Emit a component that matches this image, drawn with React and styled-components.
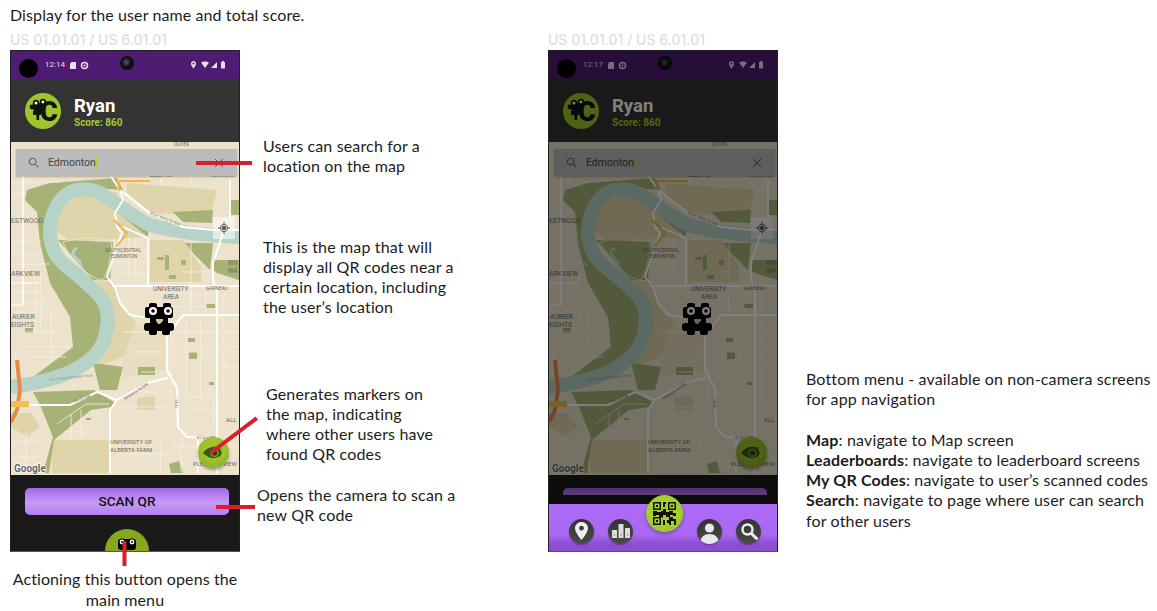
import React from 'react';
import styled, { createGlobalStyle } from 'styled-components';

const Global = createGlobalStyle`
  html, body { margin: 0; padding: 0; background: #fff; overflow: hidden; }
  body { font-family: "Lato", "Open Sans", sans-serif; }
`;
const Board = styled.main`
  position: relative; width: 1157px; height: 611px; display: flex; align-items: flex-start; color: #1c1c1c;
`;
const ScreenColumn = styled.section`
  width: ${p => p.$width}px; margin-left: ${p => p.$left}px; flex: none;
`;
const Lead = styled.p`
  margin: 0; height: 31px; padding-top: 4px; box-sizing: border-box; font-size: 16px; line-height: 21px; white-space: nowrap; letter-spacing: .1px;
`;
const Story = styled.div`
  height: 19px; font: 500 14px/17px Inter, sans-serif; color: #dedede; white-space: nowrap;
`;
const Phone = styled.div`
  position: relative; width: 230px; height: 502px; box-sizing: border-box; border: 1px solid #222; border-bottom-color: #555;
  background: #1a1a1a; overflow: hidden; display: flex; flex-direction: column;
`;
const StatusBar = styled.div`
  height: 28px; flex: none; background: #4e1d73; display: flex; align-items: center; padding: 0 12px 0 8px; position: relative; color: #e8def0;
`;
const Hole = styled.span`
  width: 19px; height: 19px; border-radius: 50%; background: #000; margin-top: 6px; flex: none;
`;
const Time = styled.span`
  font: 400 8px/1 Roboto, sans-serif; margin-left: 7px; margin-right: 4px;
`;
const Lens = styled.span`
  position: absolute; left: 109px; top: 5px; width: 14px; height: 14px; border-radius: 50%;
  background: radial-gradient(circle at 45% 45%, #3d4a5a 0 12%, #10141a 40%, #000 100%);
`;
const StatusRight = styled.span`
  margin-left: auto; display: flex; align-items: center;
`;
const Header = styled.header`
  height: 63px; flex: none; background: #333; display: flex; align-items: center; padding: 0 0 0 14px; gap: 13px;
`;
const Identity = styled.div`
  display: flex; flex-direction: column; margin-top: 2px;
`;
const Name = styled.span`
  font: 700 18.5px/22px Roboto, sans-serif; color: #fff;
`;
const Score = styled.span`
  font: 700 10px/12px Roboto, sans-serif; color: #a1cc2e;
`;
const MapArea = styled.div`
  position: relative; height: 333px; flex: none; background: #ede2cb;
`;
const MapPicture = styled.svg`
  display: block; width: 228px; height: 333px;
`;
const SearchBox = styled.div`
  position: absolute; left: 5px; top: 7px; width: 221px; height: 27px; background: #bcbcbc; box-shadow: 0 1px 2px rgba(0,0,0,.25);
  display: flex; align-items: center; padding: 0 12px; box-sizing: border-box; color: #555;
`;
const SearchText = styled.span`
  font: 400 10.5px/14px Roboto, sans-serif; color: #444; margin-left: 9px; border-right: 1px solid #b2cc2e;
`;
const ClearIcon = styled.svg`
  margin-left: auto; margin-right: 1px;
`;
const LocateButton = styled.div`
  position: absolute; left: 202px; top: 75px; width: 22px; height: 22px; background: rgba(255,255,255,.55);
  display: flex; align-items: center; justify-content: center;
`;
const EyeButton = styled.div`
  position: absolute; left: 187px; top: 295px; width: 31px; height: 31px; border-radius: 50%;
  background: radial-gradient(circle at 50% 40%, #9fc52b 40%, #85a821 100%); box-shadow: 0 2px 3px rgba(0,0,0,.35);
  display: flex; align-items: center; justify-content: center;
`;
const BottomArea = styled.div`
  flex: 1; background: #1a1a1a; padding: 13px 10px 0 14px; position: relative;
`;
const ScanButton = styled.button`
  display: block; width: 204px; height: 27px; border: 0; border-radius: 5px; padding: 0;
  background: linear-gradient(180deg, #a567ec 0%, #c79bf6 55%, #b47ff0 100%);
  font: 500 13.6px/27px Roboto, sans-serif; color: #111;
`;
const MenuButton = styled.div`
  position: absolute; left: 94px; top: 54px; width: 44px; height: 44px; border-radius: 50%; background: #86a81f;
  display: flex; justify-content: center; padding-top: 9px; box-sizing: border-box;
`;
const Dim = styled.div`
  position: absolute; inset: 0; background: rgba(0,0,0,.5);
`;
const NavSheet = styled.nav`
  position: absolute; left: 0; right: 0; bottom: 0; height: 47px; border-top: 9px solid #0b0b0b; box-sizing: content-box;
  background: linear-gradient(180deg, #ad6cf5 0%, #aa69f2 65%, #8e4fd1 85%, #8a4bcc 100%);
  display: flex; align-items: center; padding-left: 20px;
`;
const NavDisc = styled.span`
  width: 25px; height: 25px; border-radius: 50%; flex: none; margin-left: ${p => p.$gap || 0}px; margin-top: 7px;
  background: linear-gradient(180deg, #333, #4a4a4a); box-shadow: 0 1px 2px rgba(0,0,0,.3);
  display: flex; align-items: center; justify-content: center; overflow: hidden;
`;
const QrFab = styled.span`
  position: absolute; left: 97px; top: -9px; width: 37px; height: 37px; border-radius: 50%;
  background: radial-gradient(circle at 50% 45%, #a6d02d 50%, #98bf28 100%); box-shadow: 0 2px 4px rgba(0,0,0,.3);
  display: flex; align-items: center; justify-content: center;
`;
const NoteColumn = styled.aside`
  width: ${p => p.$width}px; margin-left: ${p => p.$left}px; flex: none; display: flex; flex-direction: column;
`;
const Note = styled.p`
  margin: ${p => p.$top || 0}px 0 0 ${p => p.$indent || 0}px; font-size: 16px; line-height: 20.25px; white-space: nowrap; width: max-content; letter-spacing: .15px;
`;
const CenterNote = styled.p`
  margin: 16px 0 0 -6px; width: 242px; text-align: center; font-size: 16px; line-height: 21px; letter-spacing: .1px;
`;
const Leader = styled.i`
  position: absolute; left: ${p => p.$x}px; top: ${p => p.$y}px; width: ${p => p.$len}px; height: 3.5px; background: #d81f2e;
  transform-origin: 1.75px 1.75px; transform: rotate(${p => p.$deg || 0}deg);
`;

const StatusIcons = () => (
  <svg width="36" height="10" viewBox="0 0 36 10" fill="currentColor">
    <path fillRule="evenodd" d="M2.5 1a2.6 2.6 0 0 0-2.5 2.7C0 5.5 2.5 8.5 2.5 8.5S5 5.5 5 3.7A2.6 2.6 0 0 0 2.5 1Zm0 3.6a1 1 0 1 1 0-2 1 1 0 0 1 0 2Z" />
    <path d="M10 2.5c2-1.5 6-1.5 8 0L14 8Z" />
    <path d="M20 8 26 2v6Z" />
    <rect x="30" y="2" width="4" height="6.5" rx=".6" />
    <rect x="31" y="1" width="2" height="1.5" />
  </svg>
);
const NotifyIcons = () => (
  <svg width="21" height="9" viewBox="0 0 21 9" fill="currentColor">
    <path d="M1 2.5 2.5 1H7v7H1Z" />
    <circle cx="15.5" cy="4.5" r="3" fill="none" stroke="currentColor" strokeWidth="1.5" />
    <circle cx="15.5" cy="4.5" r="1" />
  </svg>
);
const Logo = () => (
  <svg width="36" height="36" viewBox="0 0 36 36">
    <circle cx="18" cy="18" r="18" fill="#9ec62c" />
    <g fill="#111">
      <circle cx="11" cy="10" r="3.2" /><circle cx="18" cy="9" r="3.2" /><circle cx="7" cy="14" r="2.4" />
      <rect x="8" y="10" width="10" height="8" rx="2" /><circle cx="13" cy="19" r="3.6" />
      <rect x="11.5" y="21" width="2.6" height="6" /><rect x="8" y="18" width="2" height="4" />
    </g>
    <circle cx="11" cy="10" r="1.5" fill="#fff" /><circle cx="18" cy="9" r="1.5" fill="#fff" />
    <text x="15" y="28" fontFamily="Roboto" fontWeight="900" fontSize="27" fill="#111">C</text>
  </svg>
);
const Monster = ({ x, y }) => (
  <g transform={`translate(${x} ${y})`}>
    <g fill="#000">
      <rect x="1" y="4" width="28" height="11" rx="2" />
      <rect x="5" y="0" width="8" height="8" rx="2" /><rect x="19" y="0" width="8" height="8" rx="2" />
      <rect x="6" y="10" width="18" height="14" />
      <rect x="0" y="20" width="30" height="8" rx="3" />
      <rect x="5" y="24" width="8" height="8" rx="2" /><rect x="18" y="24" width="8" height="8" rx="2" />
    </g>
    <circle cx="9" cy="8" r="4" fill="#fff" /><circle cx="9" cy="8" r="1.8" fill="#000" />
    <circle cx="24" cy="8" r="4" fill="#fff" /><circle cx="24" cy="8" r="1.8" fill="#000" />
    <path d="M12 16h7v2l-3 3h-2l-2-3Z" fill="#c9c2a0" />
  </g>
);
const Road = ({ d, w = 1.8 }) => <path d={d} fill="none" stroke="#fff" strokeWidth={w} strokeLinecap="round" strokeLinejoin="round" />;
const Label = ({ x, y, s = 6, c = '#6e6a5e', r, children }) => (
  <text x={x} y={y} fontFamily="Roboto" fontSize={s} fill={c} transform={r ? `rotate(${r} ${x} ${y})` : undefined}>{children}</text>
);
const CityMap = () => (
  <MapPicture viewBox="0 0 228 333">
    <rect width="228" height="333" fill="#ede2cb" />
    <g fill="#e0d4ab">
      <path d="M116 41 206 48 200 72 160 72 139 71 116 51Z" />
      <path d="M46 56 106 50 112 70 137 95 60 100 46 90Z" />
      <path d="M139 98 172 98 190 125 190 140 139 140Z" />
      <path d="M85 138 102 140 110 165 125 180 112 215 85 225 100 190Z" />
      <path d="M41 298H99V331H41Z" /><path d="M126 256 144 254V268H126Z" />
      <path d="M0 271 20 271 29 285 16 295 0 285Z" />
      <path d="M112 180 155 190 155 230 112 235Z" opacity=".35" />
    </g>
    <g fill="#a7b276">
      <path d="M16 48 39 41 106 36 112 48 82 46 49 56 36 71 33 95 29 101 26 70 14 58Z" />
      <path d="M29 101 39 141 59 175 62 205 22 235 0 238V244L50 240 85 220 104 185 92 150 60 125 38 90Z" />
      <path d="M47 98 102 100 99 138 82 138Z" />
      <path d="M112 65 137 85V95L112 75Z" />
      <path d="M162 70 202 68 201 81 172 80Z" />
      <path d="M174 101 202 101 199 128 182 111Z" />
      <path d="M203 118H228V138L203 130Z" /><path d="M220 58H228V73H220Z" />
      <path d="M22 250 83 248 103 260 100 265 80 268 43 298 38 331H32L42 295 30 265Z" />
      <path d="M82 221 112 225 106 248 89 248Z" />
      <rect x="154" y="113" width="4" height="15" /><rect x="146" y="115" width="7" height="3" /><rect x="170" y="118" width="5" height="5" />
      <rect x="195" y="162" width="9" height="4" /><rect x="127" y="225" width="17" height="8" /><rect x="178" y="210" width="8" height="7" />
      <rect x="177" y="196" width="7" height="4" /><rect x="14" y="186" width="8" height="5" /><rect x="158" y="133" width="7" height="4" />
      <path d="M158 322 168 319 172 331H160Z" /><rect x="198" y="240" width="5" height="3" /><rect x="75" y="276" width="5" height="2" />
    </g>
    <path d="M229 95C205 94 172 92 139 83 125 77 112 65 89 51 78 46 66 46 58 51 46 57 39 75 39 91 40 105 44 113 49 118 58 128 80 142 92 158 97 168 98 176 96 185 94 200 90 207 82 215 70 226 58 232 40 237 25 241 10 244 0 245" fill="none" stroke="#b7d3c7" strokeWidth="14" />
    <path d="M66 106c-6 3-5 8 0 11 5 3 2 8 6 10" fill="none" stroke="#b7d3c7" strokeWidth="3" />
    <path d="M52 100c20-6 44-4 48 0 2 8-2 28-8 38-12 0-34-20-40-38Z" fill="none" stroke="#ece8d0" strokeWidth=".8" />
    <g fill="none" stroke="#f6f1e4" strokeWidth=".8">
      <path d="M0 40h50M0 52h14M20 28v12M35 28v10M60 28v8M80 28v8M125 33v8M150 33v10M180 33v12M128 33h90M205 50h20" />
      <path d="M0 100h30M0 112h30M5 122h34M0 150h30M0 160h35M5 170h35M10 190h40M8 205h50M20 215h35M24 130v60M30 130v60M40 170v50M5 210v22" />
      <path d="M150 152h60M150 165h44M150 190h60M150 210h60M160 178v80M175 178v80M190 178v80M130 230h30M120 250h40M112 190h40M120 210h30M180 150v20M195 150v20M213 150v110" />
      <path d="M105 120h30M110 132h28M108 108h28M118 95v40M125 95v40M170 130h35M180 100v70M215 190h13M215 205h13M215 225h13" />
      <path d="M46 282 75 262H98M52 290h30M60 272v26M70 268v28M107 265h50M110 285v10M178 255h25v30M182 268h20M160 305h25M170 300v30M110 312h50M186 300h20v30M150 300v30M210 290h18M210 305h18" />
      <path d="M0 300h30M0 315h30M15 290v40" />
    </g>
    <Road d="M99 33 109 48 139 71 172 85 202 88H228" w="2" />
    <Road d="M109 48 112 58 104 71 106 85 114 86 137 96V144" />
    <Road d="M106 85 111 91 99 125 96 135 104 145 109 161 119 173 132 175" w="2" />
    <Road d="M12 28V163" w="1.6" /><Road d="M219 38V75" w="1.6" />
    <Road d="M212 91 202 121 202 138 206 150V331" w="2" />
    <Road d="M102 144H228" /><Road d="M162 186 172 173H228" w="2.2" />
    <Road d="M156 195V228L166 246 167 285 176 295 202 296" w="2.2" />
    <Road d="M19 263H59L86 250 106 258 136 241 156 236" w="2" />
    <Road d="M106 258 99 268V331" w="2" /><Road d="M187 295V331" w="1.4" />
    <Road d="M0 141H28" w="1" /><Road d="M0 163H12" w="1" />
    <path d="M6 218 9 248 6 268 0 280" fill="none" stroke="#e58b4a" strokeWidth="4" />
    <path d="M0 262H18" stroke="#f2c050" strokeWidth="6" fill="none" />
    <path d="M106 38 109 49M108 39H139M103 78 116 91 105 105" stroke="#f2b544" strokeWidth="2" fill="none" />
    <Label x="139" y="72" s="3.8" r="22">River Valley Rd NW</Label>
    <Label x="38" y="239" s="3.8" c="#7fa098" r="-6">North Saskatchewan River</Label>
    <Label x="63" y="261" s="3.8" r="-20">Fox Dr NW</Label><Label x="114" y="258" s="3.8" r="-33">Belgravia Rd NW</Label>
    <Label x="164" y="255" s="3.8" r="90">114 St</Label><Label x="139" y="35" s="4.5">Jasper Ave</Label><Label x="200" y="35" s="4">DOWNTOWN</Label>
    <Label x="0" y="81" s="6.8">ESTWOOD</Label><Label x="0" y="134" s="6.8">ARKVIEW</Label>
    <Label x="1" y="177" s="6.8">AURIER</Label><Label x="0" y="185" s="6.8">EIGHTS</Label>
    <Label x="94" y="110" s="4.8">SOUTHCENTRAL</Label><Label x="100" y="116" s="4.8">EDMONTON</Label>
    <Label x="142" y="149" s="6.4">UNIVERSITY</Label><Label x="152" y="157" s="6.4">AREA</Label>
    <Label x="195" y="148" s="4.8">GARNEAU</Label><Label x="217" y="123" s="6.4">RIV</Label><Label x="217" y="131" s="6.4">WA</Label>
    <Label x="215" y="280" s="6">ALL</Label><Label x="99" y="302" s="6">UNIVERSITY OF</Label><Label x="99" y="310" s="6">ALBERTA FARM</Label>
    <Label x="182" y="324" s="6">PLEASANTVIEW</Label><Label x="163" y="4" s="4.5">OLIVER</Label><Label x="186" y="297" s="3.8">81 Ave NW</Label>
    <text x="3" y="330" fontFamily="Roboto" fontWeight="700" fontSize="10" fill="#666" stroke="#fff" strokeWidth="1.4" paintOrder="stroke">Google</text>
    <Monster x="133" y="161" />
  </MapPicture>
);
const SearchGlass = () => (
  <svg width="11" height="11" viewBox="0 0 12 12" fill="none" stroke="#666" strokeWidth="1.2"><circle cx="5" cy="5" r="3.6" /><path d="M8 8l3.2 3.2" /></svg>
);
const Eye = () => (
  <svg width="24" height="18" viewBox="0 0 24 18">
    <path d="M1 9C6 1 18 1 23 7 21 5 19 4 17 4 20 7 20 9 19 11 16 15 8 15 5 12 3 11 2 10 1 9Z" fill="#3b5710" />
    <circle cx="12.5" cy="9" r="4.2" fill="#7d9a1f" /><circle cx="12.5" cy="9" r="2.6" fill="#2b400b" />
  </svg>
);
const Screen = ({ time, dimmed, children }) => (
  <Phone>
    <StatusBar>
      <Hole /><Time>{time}</Time><NotifyIcons /><Lens /><StatusRight><StatusIcons /></StatusRight>
    </StatusBar>
    <Header>
      <Logo />
      <Identity><Name>Ryan</Name><Score>Score: 860</Score></Identity>
    </Header>
    <MapArea>
      <CityMap />
      <SearchBox>
        <SearchGlass /><SearchText>Edmonton</SearchText>
        <ClearIcon width="10" height="10" viewBox="0 0 10 10" stroke="#555" strokeWidth="1"><path d="M1 1l8 8M9 1l-8 8" /></ClearIcon>
      </SearchBox>
      <LocateButton>
        <svg width="12" height="12" viewBox="0 0 12 12" fill="none" stroke="#555"><circle cx="6" cy="6" r="3.6" /><circle cx="6" cy="6" r="1.8" fill="#555" /><path d="M6 0v2M6 10v2M0 6h2M10 6h2" /></svg>
      </LocateButton>
      <EyeButton><Eye /></EyeButton>
    </MapArea>
    <BottomArea>
      <ScanButton>SCAN QR</ScanButton>
      {!dimmed && (
        <MenuButton>
          <svg width="26" height="12" viewBox="0 0 26 12">
            <rect x="4" y="1" width="18" height="11" rx="3" fill="#000" /><circle cx="8" cy="4" r="3.6" fill="#000" /><circle cx="18" cy="4" r="3.6" fill="#000" />
            <circle cx="8" cy="4" r="2.4" fill="#fff" /><circle cx="8" cy="4" r="1" fill="#000" /><circle cx="18" cy="4" r="2.4" fill="#fff" /><circle cx="18" cy="4" r="1" fill="#000" />
          </svg>
        </MenuButton>
      )}
    </BottomArea>
    {children}
  </Phone>
);
const QrCode = () => (
  <svg width="23" height="23" viewBox="0 0 23 23" fill="#111">
    <path fillRule="evenodd" d="M0 0h8v8H0ZM1.5 1.5v5h5v-5ZM15 0h8v8h-8ZM16.5 1.5v5h5v-5ZM0 15h8v8H0ZM1.5 16.5v5h5v-5Z" />
    <rect x="3" y="3" width="2" height="2" /><rect x="18" y="3" width="2" height="2" /><rect x="3" y="18" width="2" height="2" />
    <path d="M10 0h3v2h-1v3h-2ZM10 7h3v3h3v-1h4v2h3v3h-3v-1h-3v2h3v2h3v6h-2v-4h-3v4h-2v-2h-2v-3h2v-3h-3v-2h-3v3H9v-1H6v-2H3v1H0V9h4v1h4V9h2Z" />
    <rect x="10" y="18" width="2" height="5" />
  </svg>
);
const NavBar = () => (
  <NavSheet>
    <NavDisc><svg width="13" height="18" viewBox="0 0 13 18"><path fillRule="evenodd" d="M6.5 0A6.2 6.2 0 0 0 0 6.2C0 10.5 6.5 18 6.5 18S13 10.5 13 6.2A6.2 6.2 0 0 0 6.5 0Zm0 8.6a2.4 2.4 0 1 1 0-4.8 2.4 2.4 0 0 1 0 4.8Z" fill="#efefef" /></svg></NavDisc>
    <NavDisc $gap={14}><svg width="18" height="14" viewBox="0 0 18 14"><rect x="0" y="6" width="5" height="8" fill="#ddd" /><rect x="6.5" y="0" width="5" height="14" fill="#ddd" /><rect x="13" y="4" width="5" height="10" fill="#ddd" /><path d="M2 11h1M8.5 11h1M15 11h1" stroke="#555" /></svg></NavDisc>
    <QrFab><QrCode /></QrFab>
    <NavDisc $gap={64}><svg width="25" height="25" viewBox="0 0 25 25" fill="#e8e8e8"><circle cx="12.5" cy="9" r="4.6" /><path d="M3 26c0-8 4-11 9.5-11S22 18 22 26Z" /></svg></NavDisc>
    <NavDisc $gap={14}><svg width="18" height="18" viewBox="0 0 18 18" fill="none" stroke="#eee"><circle cx="7.5" cy="7.5" r="5" strokeWidth="2.4" /><path d="M11.5 11.5l5 5" strokeWidth="3" strokeLinecap="round" /></svg></NavDisc>
  </NavSheet>
);

export default function App() {
  return (
    <Board>
      <Global />
      <ScreenColumn $left={10} $width={230}>
        <Lead>Display for the user name and total score.</Lead>
        <Story>US 01.01.01 / US 6.01.01</Story>
        <Screen time="12:14" />
        <CenterNote>Actioning this button opens the main menu</CenterNote>
      </ScreenColumn>
      <NoteColumn $left={17} $width={200}>
        <Note $top={136} $indent={6}>Users can search for a<br />location on the map</Note>
        <Note $top={60} $indent={6}>This is the map that will<br />display all QR codes near a<br />certain location, including<br />the user’s location</Note>
        <Note $top={66} $indent={9}>Generates markers on<br />the map, indicating<br />where other users have<br />found QR codes</Note>
        <Note $top={20}>Opens the camera to scan a<br />new QR code</Note>
      </NoteColumn>
      <ScreenColumn $left={91} $width={230}>
        <Lead />
        <Story>US 01.01.01 / US 6.01.01</Story>
        <Screen time="12:17" dimmed><Dim /><NavBar /></Screen>
      </ScreenColumn>
      <NoteColumn $left={28} $width={350}>
        <Note $top={369}>Bottom menu - available on non-camera screens<br />for app navigation</Note>
        <Note $top={20}><b>Map</b>: navigate to Map screen<br /><b>Leaderboards</b>: navigate to leaderboard screens<br /><b>My QR Codes</b>: navigate to user’s scanned codes<br /><b>Search</b>: navigate to page where user can search<br />for other users</Note>
      </NoteColumn>
      <Leader $x={196} $y={161} $len={56} />
      <Leader $x={210} $y={450} $len={58} $deg={-37} />
      <Leader $x={216} $y={505} $len={39} />
      <Leader $x={123} $y={541} $len={25} $deg={90} />
    </Board>
  );
}
